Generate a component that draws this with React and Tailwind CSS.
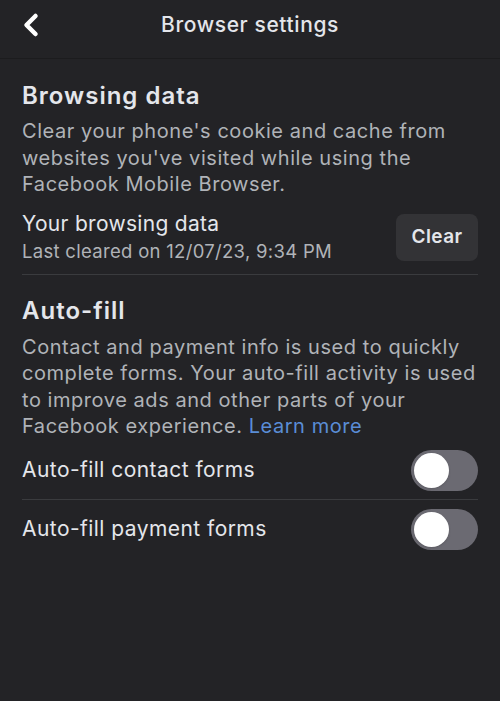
import { ChevronLeft } from 'lucide-react';

function Toggle() {
     return (
          <div className="w-[67px] h-[41px] rounded-full bg-[#6b6a72] p-[3px] flex items-center shrink-0">
               <div className="h-[35px] w-[35px] rounded-full bg-white shadow" />
          </div>
     );
}

export default function App() {
     return (
          <div className="min-h-[701px] bg-[#232326] text-[#e4e6eb]" style={{ fontFamily: 'Inter, "Noto Sans", sans-serif' }}>
               {/* Header */}
               <div className="relative h-[59px] flex items-center justify-center border-b border-[#1c1c1e]">
                    <ChevronLeft className="absolute left-[13px] top-[7px] text-white" size={36} strokeWidth={3} />
                    <h1 className="text-[21px] font-medium tracking-[0.6px] -mt-[9px]">Browser settings</h1>
               </div>

               <div className="px-[22px]">
                    {/* Browsing data */}
                    <h2 className="text-[24px] font-semibold mt-[22px] leading-[30px] tracking-[1px]">Browsing data</h2>
                    <p className="text-[20px] leading-[26.5px] text-[#b0b3b8] mt-[7px] tracking-[0.55px]">
                         Clear your phone's cookie and cache from websites you've visited while using the Facebook Mobile Browser.
                    </p>
                    <div className="flex items-center justify-between pt-[13px] pb-[9px] border-b border-[#3a3b3e]">
                         <div>
                              <div className="text-[21px] leading-[26px] tracking-[0.3px]">Your browsing data</div>
                              <div className="text-[18.5px] leading-[28px] tracking-[0.3px] text-[#b0b3b8]">Last cleared on 12/07/23, 9:34 PM</div>
                         </div>
                         <button className="h-[47px] w-[82px] rounded-lg bg-[#333336] text-[19px] font-semibold text-[#e4e6eb] tracking-[0.4px]">Clear</button>
                    </div>

                    {/* Auto-fill */}
                    <h2 className="text-[24px] font-semibold mt-[21px] leading-[30px] tracking-[1px]">Auto-fill</h2>
                    <p className="text-[20px] leading-[26.5px] text-[#b0b3b8] mt-[8px] tracking-[0.55px]">
                         Contact and payment info is used to quickly complete forms. Your auto-fill activity is used to improve ads and other parts of your Facebook experience. <span className="text-[#5a8dd6]">Learn more</span>
                    </p>
                    <div className="flex items-center justify-between pt-[10px] pb-[8px] border-b border-[#3a3b3e]">
                         <span className="text-[21px] tracking-[0.45px]">Auto-fill contact forms</span>
                         <Toggle />
                    </div>
                    <div className="flex items-center justify-between pt-[9px]">
                         <span className="text-[21px] tracking-[0.45px]">Auto-fill payment forms</span>
                         <Toggle />
                    </div>
               </div>
          </div>
     );
}
